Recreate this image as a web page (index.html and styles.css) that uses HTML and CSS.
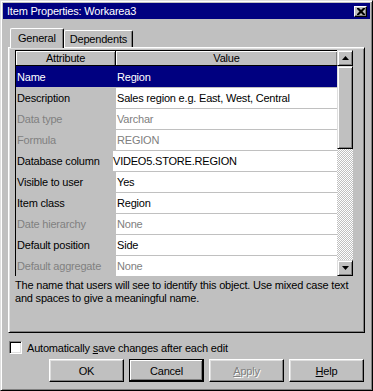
FILE: index.html
```html
<!DOCTYPE html>
<html lang="en">
<head>
  <meta charset="UTF-8">
  <meta name="viewport" content="width=device-width, initial-scale=1.0">
  <title>Item Properties</title>
  <link rel="stylesheet" href="styles.css">
</head>
<body>
  <div class="window">
    <div class="titlebar">
      <span class="title">Item Properties: Workarea3</span>
      <span class="close">
        <svg width="8" height="7" viewBox="0 0 8 7">
          <path d="M0 0h2l2 2 2-2h2v1l-2.5 2.5L8 6v1H6L4 5 2 7H0V6l2.5-2.5L0 1z" fill="#000"/>
        </svg>
      </span>
    </div>

    <div class="main">
      <div class="tabs">
        <div class="tab active">General</div>
        <div class="tab">Dependents</div>
      </div>

      <div class="panel">
        <div class="list">
          <div class="grid">
            <div class="head">
              <div class="hcell attr">Attribute</div>
              <div class="hcell val">Value</div>
            </div>
            <div class="row selected"><div class="cell attr">Name</div><div class="cell val">Region</div></div>
            <div class="row"><div class="cell attr">Description</div><div class="cell val">Sales region e.g. East, West, Central</div></div>
            <div class="row off"><div class="cell attr">Data type</div><div class="cell val">Varchar</div></div>
            <div class="row off"><div class="cell attr">Formula</div><div class="cell val">REGION</div></div>
            <div class="row"><div class="cell attr">Database column</div><div class="cell val tight">VIDEO5.STORE.REGION</div></div>
            <div class="row"><div class="cell attr">Visible to user</div><div class="cell val">Yes</div></div>
            <div class="row"><div class="cell attr">Item class</div><div class="cell val">Region</div></div>
            <div class="row off"><div class="cell attr">Date hierarchy</div><div class="cell val">None</div></div>
            <div class="row"><div class="cell attr">Default position</div><div class="cell val">Side</div></div>
            <div class="row off"><div class="cell attr">Default aggregate</div><div class="cell val">None</div></div>
          </div>

          <div class="scrollbar">
            <div class="sbtn">
              <svg width="7" height="4" viewBox="0 0 7 4"><path d="M3.5 0L7 4H0z" fill="#000"/></svg>
            </div>
            <div class="thumb"></div>
            <div class="track"></div>
            <div class="sbtn">
              <svg width="7" height="4" viewBox="0 0 7 4"><path d="M0 0h7L3.5 4z" fill="#000"/></svg>
            </div>
          </div>
        </div>

        <p class="hint">The name that users will see to identify this object. Use mixed case text<br>and spaces to give a meaningful name.</p>
      </div>

      <label class="check">
        <span class="box"></span>
        <span>Automatically <u>s</u>ave changes after each edit</span>
      </label>

      <div class="buttons">
        <button>OK</button>
        <button class="default">Cancel</button>
        <button class="disabled"><u>A</u>pply</button>
        <button><u>H</u>elp</button>
      </div>
    </div>
  </div>
</body>
</html>
```

FILE: styles.css
```css
body {
  margin: 0;
  background: #c0c0c0;
}

.window, button {
  font-family: "Liberation Sans", Arial, sans-serif;
  font-size: 11px;
  letter-spacing: -0.2px;
  color: #000;
}

.window {
  width: 373px;
  height: 391px;
  box-sizing: border-box;
  padding: 2px;
  background: #c0c0c0;
  border: 1px solid;
  border-color: #dfdfdf #000 #000 #dfdfdf;
  box-shadow: inset 1px 1px #fff, inset -1px -1px #808080;
}

.titlebar {
  height: 16px;
  display: flex;
  align-items: center;
  justify-content: space-between;
  padding: 0 3px 0 4px;
  background: #000080;
  color: #fff;
}

.close {
  width: 11px;
  height: 9px;
  display: flex;
  align-items: center;
  justify-content: center;
  background: #c0c0c0;
  border: 1px solid;
  border-color: #fff #000 #000 #fff;
  box-shadow: inset -1px -1px #808080;
}

.main {
  padding: 0 5px;
}

/* tabs */
.tabs {
  height: 19px;
  margin-top: 9px;
  padding-left: 2px;
  display: flex;
  align-items: flex-end;
}

.tab {
  height: 17px;
  box-sizing: border-box;
  padding: 0 5px;
  display: flex;
  align-items: center;
  border: 1px solid;
  border-bottom: none;
  border-color: #fff #000 #000 #fff;
  border-radius: 2px 2px 0 0;
  box-shadow: inset -1px 0 #808080;
  background: #c0c0c0;
}

.tab.active {
  height: 20px;
  margin-bottom: -1px;
  padding: 0 7px 2px;
  position: relative;
  z-index: 1;
}

.panel {
  height: 286px;
  box-sizing: border-box;
  padding: 2px 0 0 6px;
  border: 1px solid;
  border-color: #fff #000 #000 #fff;
  box-shadow: inset 1px 1px #dfdfdf, inset -1px -1px #808080;
}

/* attribute list */
.list {
  display: flex;
  height: 226px;
}

.grid {
  width: 322px;
  box-sizing: border-box;
  border-top: 1px solid #000;
  border-left: 1px solid #000;
  background: #fff;
}

.head {
  height: 15px;
  display: flex;
  box-sizing: border-box;
  border-bottom: 1px solid #000;
}

.hcell {
  display: flex;
  align-items: center;
  justify-content: center;
  background: #c0c0c0;
  box-shadow: inset 1px 1px #fff, inset -1px 0 #808080;
}

.hcell.attr {
  width: 100px;
  box-sizing: border-box;
  border-right: 1px solid #000;
}

.hcell.val {
  flex: 1;
}

.row {
  height: 21px;
  box-sizing: border-box;
  display: flex;
  border-top: 1px solid #c0c0c0;
}

.cell {
  line-height: 20px;
  padding-left: 1px;
  white-space: nowrap;
}

.cell.attr {
  width: 100px;
  box-sizing: border-box;
  background: #c0c0c0;
}

.cell.val {
  flex: 1;
  background: #fff;
}

.cell.tight {
  margin-left: -3px;
  padding-left: 0;
}

.row.off .cell {
  color: #808080;
}

.row.selected {
  border-top-color: #000080;
}

.row.selected .cell {
  background: #000080;
  color: #fff;
}

.scrollbar {
  width: 16px;
  display: flex;
  flex-direction: column;
}

.sbtn, .thumb {
  box-sizing: border-box;
  background: #c0c0c0;
  border: 1px solid;
  border-color: #dfdfdf #000 #000 #dfdfdf;
  box-shadow: inset 1px 1px #fff, inset -1px -1px #808080;
}

.sbtn {
  height: 16px;
  display: flex;
  align-items: center;
  justify-content: center;
}

.thumb {
  height: 83px;
}

.track {
  flex: 1;
  background: repeating-conic-gradient(#c0c0c0 0 25%, #fff 0 50%) 0 0 / 2px 2px;
}

.hint {
  margin: 3px 0 0;
  line-height: 13px;
  white-space: nowrap;
}

/* bottom */
.check {
  margin: 8px 0 0 1px;
  height: 13px;
  display: flex;
  align-items: center;
  gap: 5px;
}

.box {
  width: 13px;
  height: 13px;
  box-sizing: border-box;
  background: #fff;
  border: 1px solid;
  border-color: #808080 #fff #fff #808080;
  box-shadow: inset 1px 1px #000, inset -1px -1px #dfdfdf;
}

.buttons {
  margin-top: 5px;
  padding-right: 1px;
  display: flex;
  justify-content: flex-end;
  gap: 5px;
}

button {
  width: 75px;
  height: 23px;
  padding: 0;
  background: #c0c0c0;
  border: 1px solid;
  border-color: #fff #000 #000 #fff;
  box-shadow: inset -1px -1px #808080, inset 1px 1px #dfdfdf;
}

button.default {
  border-color: #000;
  box-shadow: inset -1px -1px #000, inset 1px 1px #fff, inset -2px -2px #808080;
}

button.disabled {
  color: #808080;
  text-shadow: 1px 1px #fff;
}
```
